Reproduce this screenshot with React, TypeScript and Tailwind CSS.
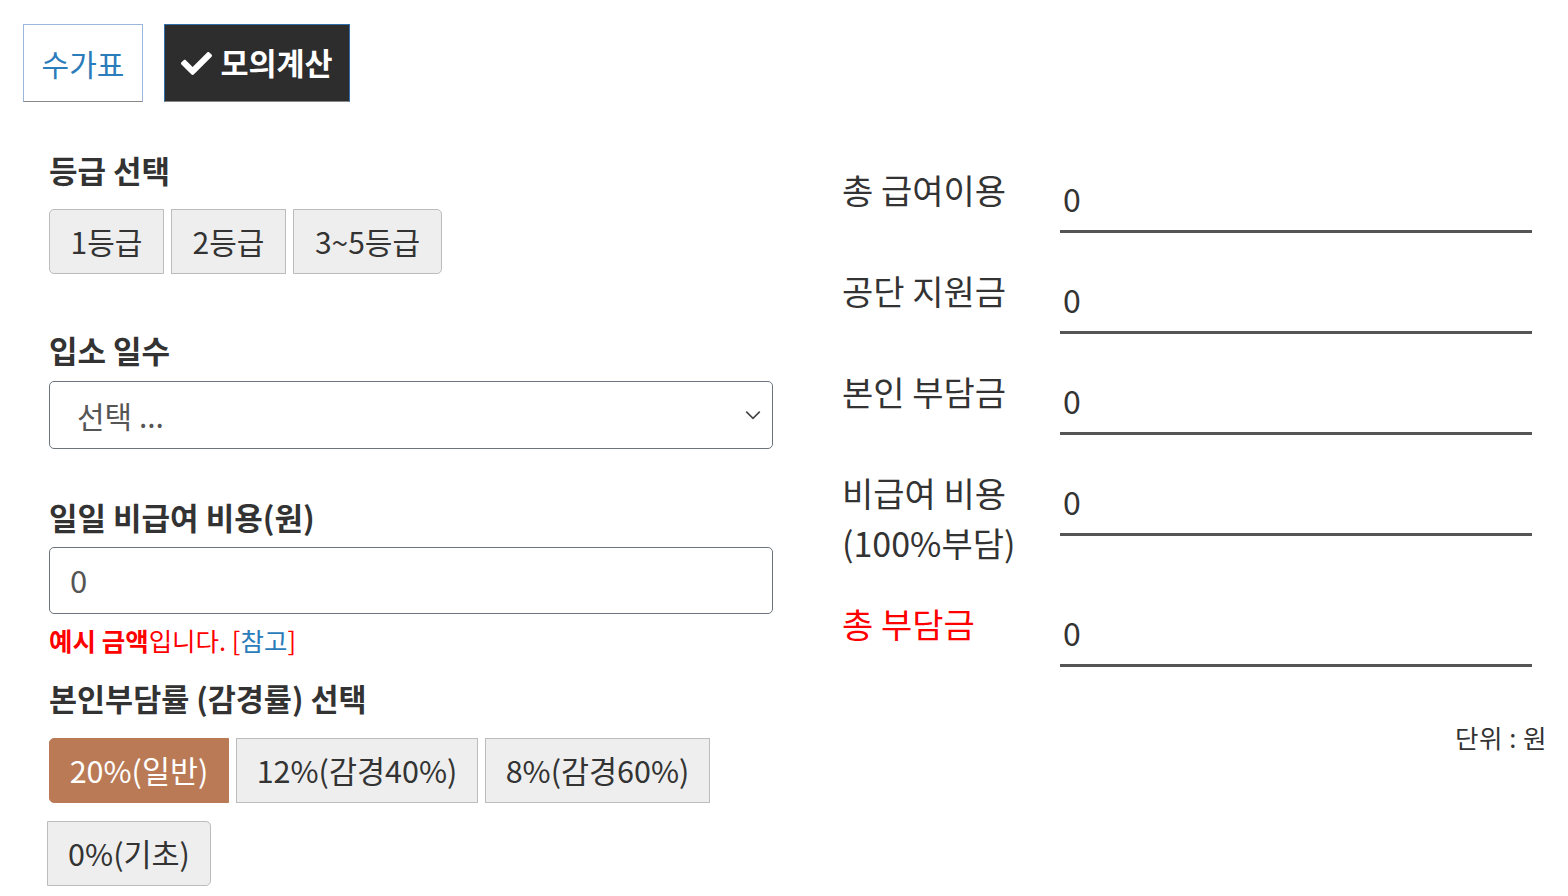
import React, { useState } from "react";

const font = { fontFamily: '"Noto Sans CJK KR", "Noto Sans", sans-serif' };

const grades = ["1등급", "2등급", "3~5등급"];
const gradeWidths = ["w-[115px]", "w-[115px]", "w-[149px]"];

const rates = ["20%(일반)", "12%(감경40%)", "8%(감경60%)", "0%(기초)"];
const rateWidths = ["w-[180px]", "w-[242px]", "w-[225px]", "w-[164px]"];

type ResultRow = {
  label: React.ReactNode;
  red?: boolean;
};

const results: ResultRow[] = [
  { label: "총 급여이용" },
  { label: "공단 지원금" },
  { label: "본인 부담금" },
  {
    label: (
      <>
        비급여 비용
        <br />
        (100%부담)
      </>
    ),
  },
  { label: "총 부담금", red: true },
];

const App = () => {
  const [rate, setRate] = useState<number>(0);

  return (
    <div style={font} className="w-[1568px] min-h-[896px] bg-white text-[#333]">
      <div className="flex gap-[21px] pl-[23px] pt-[24px]">
        <div className="w-[120px] h-[78px] flex items-center justify-center border border-[#9db7dc] border-b-[#888] border-b-dotted text-[30px] text-[#2b7cba]">
          수가표
        </div>
        <div className="w-[186px] h-[78px] flex items-center justify-center gap-[8px] bg-[#2d2d2d] border border-[#2f6ea8] border-b-[#888] border-b-dotted text-[30.5px] font-bold text-white">
          <svg viewBox="0 0 512 512" className="w-[31px] h-[31px] fill-white">
            <path d="M173.898 439.404l-166.4-166.4c-9.997-9.997-9.997-26.206 0-36.204l36.203-36.204c9.997-9.998 26.207-9.998 36.204 0L192 312.69 432.095 72.596c9.997-9.997 26.207-9.997 36.204 0l36.203 36.204c9.997 9.997 9.997 26.206 0 36.204l-294.4 294.401c-9.998 9.997-26.207 9.997-36.204-.001z" />
          </svg>
          모의계산
        </div>
      </div>

      <div className="flex pl-[49px] pt-[48px]">
        {/* left form */}
        <div className="w-[724px] flex flex-col">
          <h3 className="text-[31px] leading-[40px] font-bold">등급 선택</h3>
          <div className="flex gap-[7px] mt-[19px]">
            {grades.map((g, i) => (
              <button
                key={g}
                className={
                  "h-[65px] bg-[#eee] border border-[#bcbcbc] text-[30px] " +
                  gradeWidths[i] +
                  (i === 0 ? " rounded-l-[5px]" : "") +
                  (i === grades.length - 1 ? " rounded-r-[5px]" : "")
                }
              >
                {g}
              </button>
            ))}
          </div>

          <h3 className="text-[31px] leading-[40px] font-bold mt-[56px]">입소 일수</h3>
          <div className="mt-[11px] h-[68px] border border-[#6c757d] rounded-[5px] flex items-center justify-between pl-[27px] pr-[10px]">
            <span className="text-[30px] text-[#555]">선택 ...</span>
            <svg viewBox="0 0 16 16" className="w-[18px] h-[18px]" fill="none" stroke="#444" strokeWidth="1.4">
              <polyline points="2,5 8,11 14,5" />
            </svg>
          </div>

          <h3 className="text-[31px] leading-[40px] font-bold mt-[48px]">일일 비급여 비용(원)</h3>
          <div className="mt-[10px] h-[67px] border border-[#6c757d] rounded-[5px] flex items-center pl-[20px]">
            <span className="text-[31px] text-[#555]">0</span>
          </div>
          <p className="mt-[9px] text-[25.5px] leading-[34px] text-[#f00]">
            <b>예시 금액</b>입니다. [<span className="text-[#2b7cba]">참고</span>]
          </p>

          <h3 className="text-[30.5px] leading-[40px] font-bold mt-[21px]">본인부담률 (감경률) 선택</h3>
          <div className="flex flex-wrap gap-x-[7px] gap-y-[18px] mt-[20px] -ml-[2px] pl-[2px]">
            {rates.map((r, i) => (
              <button
                key={r}
                onClick={() => setRate(i)}
                className={
                  "h-[65px] border text-[30.5px] " +
                  rateWidths[i] +
                  (rate === i ? " bg-[#b97a55] border-[#b97a55] text-white" : " bg-[#eee] border-[#bcbcbc]") +
                  (i === 0 ? " rounded-l-[5px]" : "") +
                  (i === rates.length - 1 ? " rounded-r-[5px] -ml-[2px]" : "")
                }
              >
                {r}
              </button>
            ))}
          </div>
        </div>

        {/* right results */}
        <div className="ml-[69px] w-[705px] flex flex-col pt-[15px]">
          {results.map((row, i) => (
            <div key={i} className={"flex" + (i === 4 ? " mt-[31px]" : i > 0 ? " mt-[33px]" : "")}>
              <div className={"w-[218px] text-[34px] leading-[50px]" + (row.red ? " text-[#f00]" : "")}>
                {row.label}
              </div>
              <div className="w-[472px] self-start h-[68px] border-b-[3px] border-[#555] pt-[13px] pl-[3px] text-[32px] leading-[40px]">
                0
              </div>
            </div>
          ))}
          <div className="mt-[53px] text-right text-[25.5px] leading-[34px] tracking-[0.5px]">단위 : 원</div>
        </div>
      </div>
    </div>
  );
};

export default App;
